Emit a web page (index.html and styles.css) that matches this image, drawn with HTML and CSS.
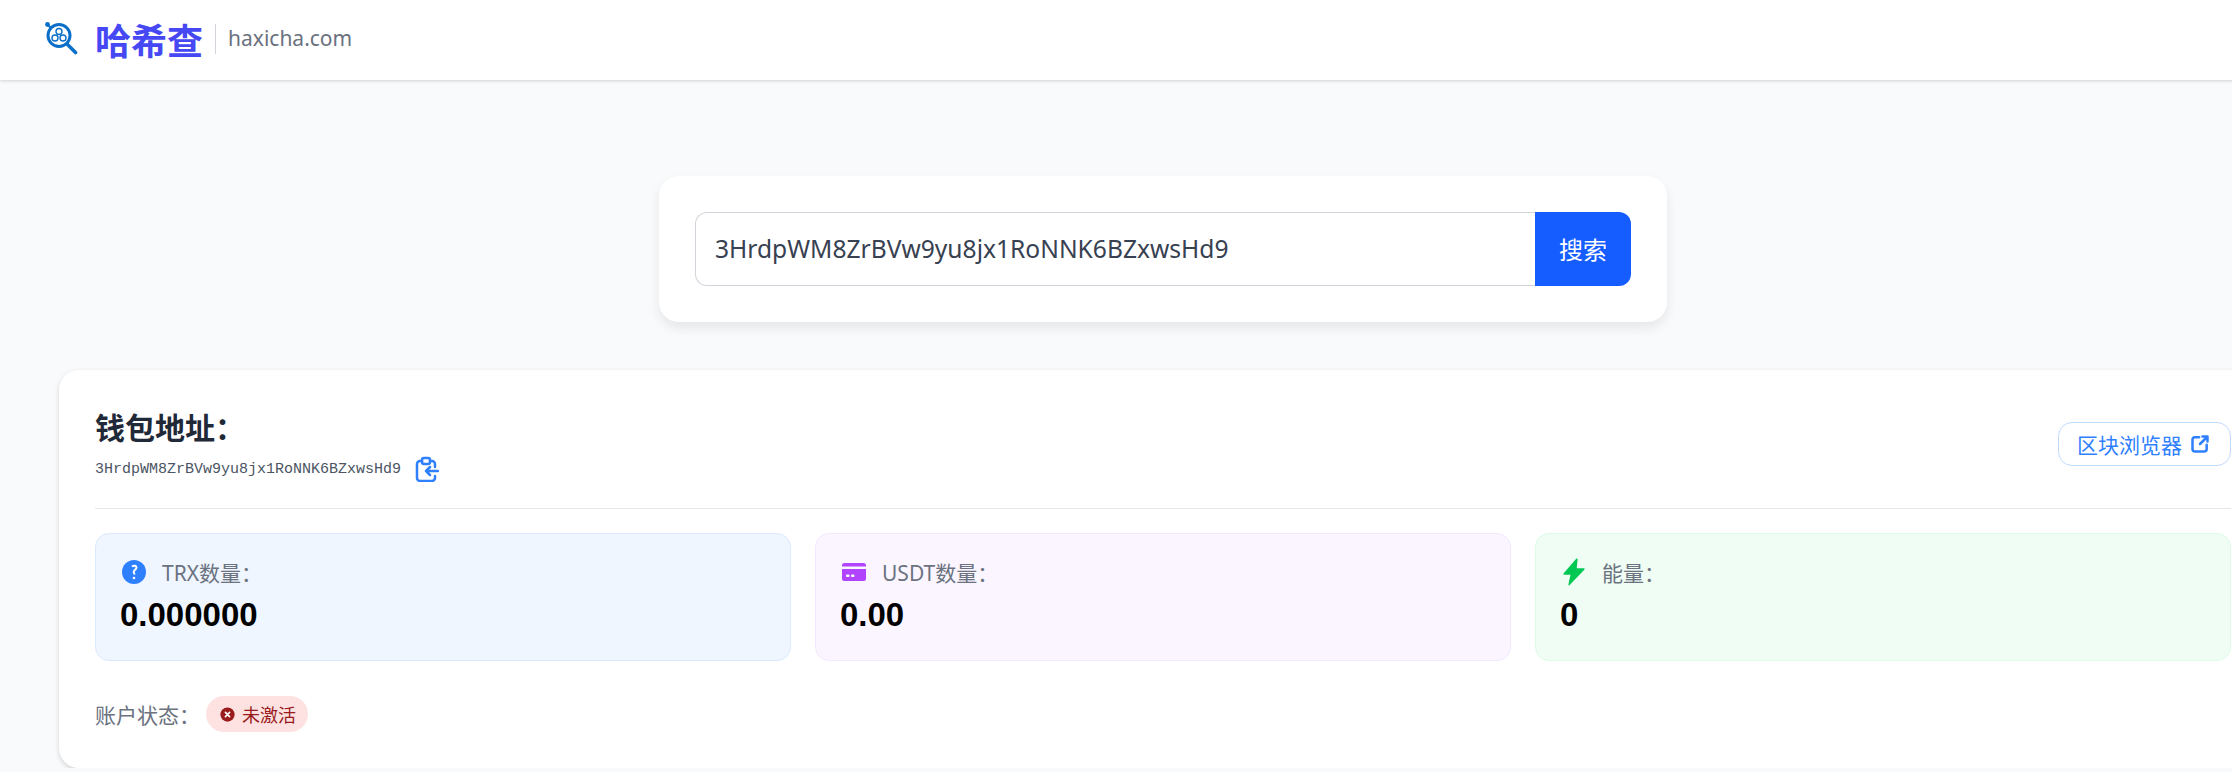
FILE: index.html
```html
<!DOCTYPE html>
<html lang="zh-CN">
<head>
  <meta charset="UTF-8" />
  <meta name="viewport" content="width=device-width, initial-scale=1.0"/>
  <title>哈希查</title>
  <link rel="stylesheet" href="styles.css">
</head>
<body>

<div class="page">
  <header class="topbar">
    <svg class="logo-icon" viewBox="0 0 34 34" fill="none" stroke="#0b6fc9">
      <circle cx="3.500" cy="3.500" r="2.400" fill="#0b6fc9" stroke="none"/>
      <path d="M4 4l3 3" stroke-width="2.200"/>
      <circle cx="15" cy="14.500" r="11" stroke-width="3"/>
      <path d="M23 23l8.500 8.500" stroke-width="3.600" stroke-linecap="round"/>
      <circle cx="15" cy="10.500" r="3" stroke-width="1.400"/>
      <circle cx="11" cy="17" r="3" stroke-width="1.400"/>
      <circle cx="19" cy="17" r="3" stroke-width="1.400"/>
    </svg>
    <span class="logo-text">哈希查</span>
    <span class="logo-domain">haxicha.com</span>
  </header>

  <section class="search-card">
    <div class="search-box">
      <input class="search-input" type="text" value="3HrdpWM8ZrBVw9yu8jx1RoNNK6BZxwsHd9">
      <button class="search-btn">搜索</button>
    </div>
  </section>

  <section class="wallet-card">
    <div class="wallet-head">
      <div>
        <h2 class="wallet-title">钱包地址：</h2>
        <div class="wallet-address">
          <span>3HrdpWM8ZrBVw9yu8jx1RoNNK6BZxwsHd9</span>
          <svg class="copy-icon" viewBox="0 0 24 26" fill="none" stroke="#2f80ff" stroke-width="2.500" stroke-linecap="round" stroke-linejoin="round">
            <path d="M7 5H5a3 3 0 0 0-3 3v14a3 3 0 0 0 3 3h12a3 3 0 0 0 3-3v-2"/>
            <path d="M15 5h2a3 3 0 0 1 3 3v3"/>
            <rect x="7" y="2" width="8" height="6" rx="2"/>
            <path d="M23 15H11M15 11l-4 4 4 4"/>
          </svg>
        </div>
      </div>
      <a class="explorer-btn">区块浏览器
        <svg class="explorer-icon" viewBox="0 0 24 24" fill="none" stroke="#2f80ff" stroke-width="3" stroke-linecap="round" stroke-linejoin="round">
          <path d="M11 4H6a3 3 0 0 0-3 3v11a3 3 0 0 0 3 3h11a3 3 0 0 0 3-3v-5"/>
          <path d="M12 12l9-9M15 3h6v6"/>
        </svg>
      </a>
    </div>

    <div class="stats">
      <div class="stat stat-blue">
        <div class="stat-label">
          <svg class="stat-icon" viewBox="0 0 28 28">
            <circle cx="14" cy="14" r="12" fill="#2f80ff"/>
            <path d="M12 8.500c2-1.500 4.500-.8 4.500 1 0 2-2.800 2.400-2.800 4.500 0 1 .8 1.400 .8 2.500" fill="none" stroke="#fff" stroke-width="2"/>
            <circle cx="14" cy="20" r="1.300" fill="#fff"/>
          </svg>
          <span>TRX数量：</span>
        </div>
        <div class="stat-value">0.000000</div>
      </div>
      <div class="stat stat-purple">
        <div class="stat-label">
          <svg class="stat-icon" viewBox="0 0 28 28">
            <path d="M4.500 5h19A2.500 2.500 0 0 1 26 7.500V8.500H2v-1A2.500 2.500 0 0 1 4.500 5z" fill="#b044ff"/>
            <path d="M2 11h24v9.500a2.500 2.500 0 0 1-2.500 2.500h-19A2.500 2.500 0 0 1 2 20.500z" fill="#b044ff"/>
            <rect x="6" y="16.500" width="3.500" height="2.500" rx="1" fill="#fff"/>
            <rect x="11" y="16.500" width="3.500" height="2.500" rx="1" fill="#fff"/>
          </svg>
          <span>USDT数量：</span>
        </div>
        <div class="stat-value">0.00</div>
      </div>
      <div class="stat stat-green">
        <div class="stat-label">
          <svg class="stat-icon" viewBox="0 0 28 28">
            <path d="M16.200 .8L3.500 15.500c-.4 .5 0 1.200 .6 1.200h6.400L8.400 26.500c-.1 .8 .8 1.200 1.300 .6L24.500 11.500c.4-.5 0-1.200-.6-1.200h-7.200l.9-8.800c.1-.8-.9-1.200-1.400-.7z" fill="#00c853"/>
          </svg>
          <span>能量：</span>
        </div>
        <div class="stat-value">0</div>
      </div>
    </div>

    <div class="status-row">
      <span class="status-label">账户状态：</span>
      <span class="status-pill">
        <svg class="status-icon" viewBox="0 0 16 16">
          <circle cx="8" cy="8" r="7.600" fill="#991b1b"/>
          <path d="M5.800 5.800l4.400 4.400M10.200 5.800l-4.400 4.400" stroke="#fff" stroke-width="1.800" stroke-linecap="round"/>
        </svg>
        未激活
      </span>
    </div>
  </section>
</div>

</body>
</html>
```

FILE: styles.css
```css
html, body {
  margin: 0;
  padding: 0;
  overflow: hidden;
}

body {
  font-family: "Noto Sans", "Noto Sans CJK SC", sans-serif;
  background-color: #f9fafb;
}

.page {
  width: 2326px;
}

.topbar {
  display: flex;
  align-items: center;
  box-sizing: border-box;
  height: 80px;
  padding: 0 44px;
  background-color: #fff;
  box-shadow: 0 1px 3px rgba(0, 0, 0, 0.16);
}

.logo-icon {
  width: 34px;
  height: 34px;
  margin-top: -4px;
  margin-right: 17px;
}

.logo-text {
  font-family: "Noto Sans CJK SC", sans-serif;
  font-size: 36px;
  font-weight: 700;
  color: #4648f4;
  padding-right: 12px;
  border-right: 1px solid #d1d5db;
  height: 30px;
  margin-top: -3px;
  display: flex;
  align-items: center;
}

.logo-domain {
  font-size: 21px;
  color: #6b7280;
  margin-left: 12px;
  margin-top: -4px;
}

.search-card {
  box-sizing: border-box;
  width: 1008px;
  height: 146px;
  margin: 96px auto 48px;
  padding: 36px;
  background-color: #fff;
  border-radius: 20px;
  box-shadow: 0 6px 12px rgba(0, 0, 0, 0.08);
}

.search-box {
  display: flex;
  height: 74px;
}

.search-input {
  flex: 1;
  box-sizing: border-box;
  min-width: 0;
  padding: 0 0 2px 19px;
  font-family: "Noto Sans", sans-serif;
  font-size: 24.6px;
  color: #374151;
  border: 1px solid #d1d5db;
  border-right: none;
  border-radius: 12px 0 0 12px;
  outline: none;
}

.search-btn {
  width: 96px;
  padding: 0 0 2px;
  font-family: "Noto Sans CJK SC", sans-serif;
  font-size: 24px;
  color: #fff;
  background-color: #165dff;
  border: none;
  border-radius: 0 12px 12px 0;
}

.wallet-card {
  box-sizing: border-box;
  width: 2208px;
  height: 398px;
  margin: 0 auto;
  padding: 36px;
  background-color: #fff;
  border-radius: 20px;
  box-shadow: 0 2px 5px rgba(0, 0, 0, 0.16);
}

.wallet-head {
  display: flex;
  justify-content: space-between;
  align-items: center;
  box-sizing: border-box;
  height: 103px;
  padding-bottom: 26px;
  border-bottom: 1px solid #e5e7eb;
}

.wallet-title {
  margin: -2px 0 0;
  font-family: "Noto Sans CJK SC", sans-serif;
  font-size: 30px;
  font-weight: 700;
  line-height: 44px;
  color: #1f2937;
}

.wallet-address {
  display: flex;
  align-items: center;
  gap: 14px;
  margin-top: 8px;
  font-family: "Liberation Mono", monospace;
  font-size: 15px;
  color: #4b5563;
}

.copy-icon {
  width: 24px;
  height: 26px;
}

.explorer-btn {
  display: flex;
  align-items: center;
  gap: 8px;
  box-sizing: border-box;
  width: 173px;
  height: 44px;
  padding-left: 18px;
  font-family: "Noto Sans CJK SC", sans-serif;
  font-size: 21px;
  white-space: nowrap;
  color: #2f80ff;
  background-color: #fff;
  border: 1px solid #bfdbfe;
  border-radius: 14px;
}

.explorer-icon {
  width: 20px;
  height: 20px;
}

.stats {
  display: grid;
  grid-template-columns: repeat(3, 696px);
  gap: 24px;
  margin-top: 24px;
}

.stat {
  box-sizing: border-box;
  height: 128px;
  padding: 24px 24px;
  border: 1px solid;
  border-radius: 14px;
}

.stat-blue {
  background-color: #eff6ff;
  border-color: #dbeafe;
}

.stat-purple {
  background-color: #faf5ff;
  border-color: #f3e8ff;
}

.stat-green {
  background-color: #f0fdf4;
  border-color: #dcfce7;
}

.stat-label {
  display: flex;
  align-items: center;
  gap: 14px;
  height: 28px;
  font-size: 21px;
  color: #6b7280;
}

.stat-icon {
  width: 28px;
  height: 28px;
}

.stat-value {
  margin-top: 8px;
  font-family: "Liberation Sans", sans-serif;
  font-size: 33px;
  font-weight: 700;
  line-height: 42px;
  color: #000;
}

.status-row {
  display: flex;
  align-items: center;
  gap: 6px;
  margin-top: 35px;
}

.status-label {
  font-size: 21px;
  color: #6b7280;
}

.status-pill {
  display: flex;
  align-items: center;
  gap: 7px;
  height: 36px;
  padding: 0 12px 0 14px;
  font-size: 18px;
  color: #991b1b;
  background-color: #fee2e2;
  border-radius: 18px;
}

.status-icon {
  width: 15px;
  height: 15px;
}
```
